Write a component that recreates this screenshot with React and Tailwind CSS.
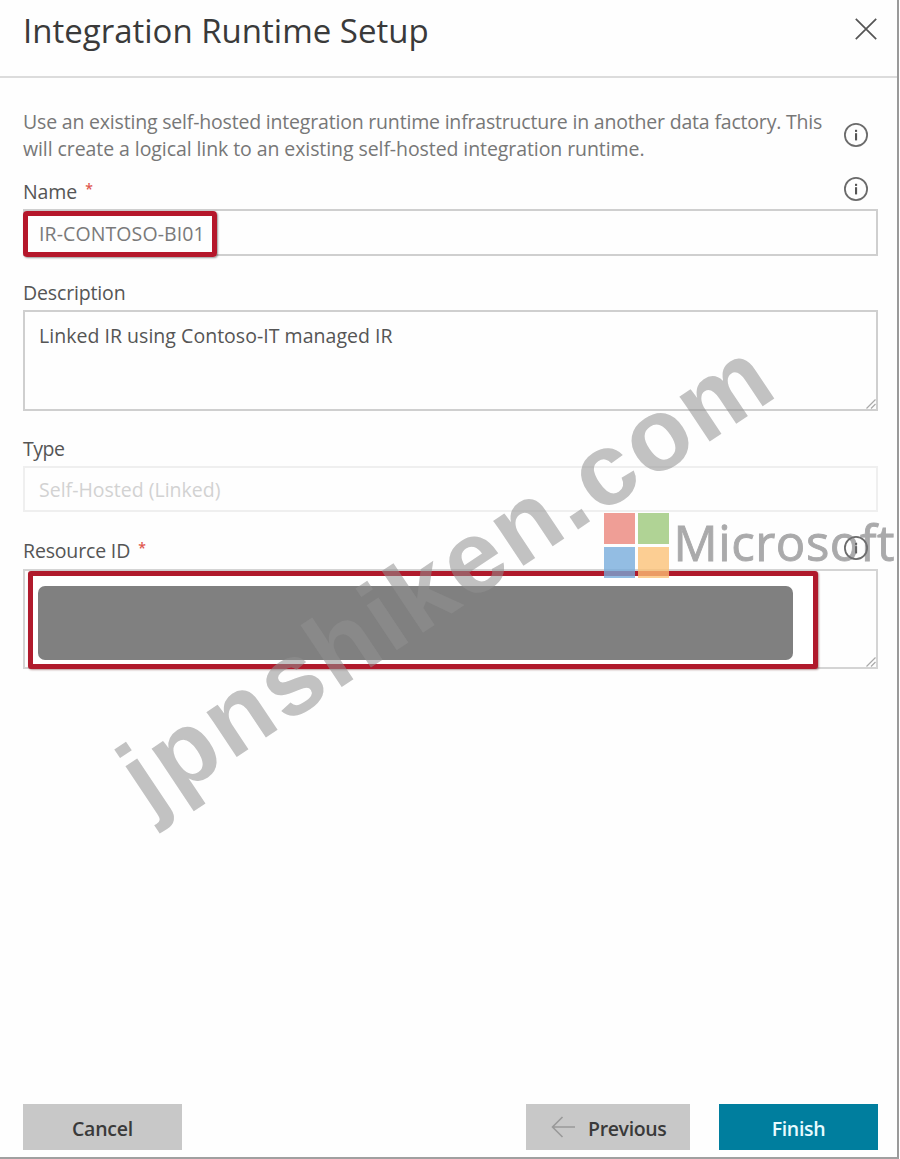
function InfoIcon({ className = "" }) {
  return (
    <svg viewBox="0 0 26 26" className={"h-[26px] w-[26px] shrink-0 " + className} fill="none">
      <circle cx="13" cy="13" r="11.1" stroke="#6b6b6b" strokeWidth="1.8" />
      <rect x="12" y="11.2" width="2.1" height="7.2" fill="#555" />
      <rect x="12" y="7.8" width="2.1" height="2.1" fill="#555" />
    </svg>
  );
}

function ResizeGrip() {
  return (
    <svg viewBox="0 0 10 10" className="absolute right-0 bottom-0 h-[10px] w-[10px]" stroke="#aaa" strokeWidth="1.2">
      <path d="M0.5 9.5 9.5 0.5M5 9.5 9.5 5" fill="none" />
    </svg>
  );
}

function Required() {
  return <span className="mt-[4px] ml-[8px] text-[14px] leading-[14px] font-semibold text-[#e0584f]">*</span>;
}

function Label({ children, className = "" }) {
  return <div className={"flex h-[27px] leading-[27px] text-[#555] " + className}>{children}</div>;
}

export default function App() {
  return (
    <div className="relative flex h-[1159px] w-[899px] flex-col overflow-hidden border-r-2 border-b-2 border-r-[#9a9a9a] border-b-[#a0a0a0] bg-[#fefefe] font-['Open_Sans',sans-serif] text-[19.5px]">
      <header className="flex h-[78px] items-start justify-between border-b-2 border-[#dcdcdc] pr-[20px] pl-[23px]">
        <h1 className="mt-[8px] text-[33px] leading-[45px] text-[#3a3a3a]">Integration Runtime Setup</h1>
        <svg viewBox="0 0 22 22" className="mt-[18px] h-[22px] w-[22px]" stroke="#555" strokeWidth="1.7" fill="none">
          <path d="M0.8 0.8 21.2 21.2M21.2 0.8 0.8 21.2" />
        </svg>
      </header>

      <main className="flex flex-1 flex-col pt-[30px] pr-[19px] pl-[23px]">
        <div className="flex justify-between">
          <p className="leading-[27px] whitespace-nowrap text-[#777]">
            <span className="block tracking-[-0.19px]">
              Use an existing self-hosted integration runtime infrastructure in another data factory. This
            </span>
            <span className="block tracking-[-0.08px]">
              will create a logical link to an existing self-hosted integration runtime.
            </span>
          </p>
          <InfoIcon className="mt-[14px] mr-[9px]" />
        </div>

        <div className="mt-[14px] flex h-[33px] items-start justify-between">
          <Label className="mt-[2px] tracking-[-0.1px]">
            Name
            <Required />
          </Label>
          <InfoIcon className="mr-[9px]" />
        </div>
        <div className="relative flex h-[47px] items-center border-2 border-[#cfcfcf] pl-[14px] tracking-[0.1px] text-[#7a7a7a]">
          <span className="mt-[2px]">IR-CONTOSO-BI01</span>
          <div className="absolute top-0 -left-[2px] h-[46px] w-[194px] rounded-[4px] border-[5px] border-[#b5172b] shadow-[1px_1px_2px_rgba(0,0,0,0.4)]" />
        </div>

        <Label className="mt-[23px] tracking-[-0.15px]">Description</Label>
        <div className="relative mt-[4px] h-[101px] border-2 border-[#cfcfcf] pt-[10px] pl-[14px] leading-[27px] tracking-[0.03px] text-[#555]">
          Linked IR using Contoso-IT managed IR
          <ResizeGrip />
        </div>

        <Label className="mt-[24px] tracking-[-0.5px]">Type</Label>
        <div className="mt-[4px] flex h-[46px] items-center border-2 border-[#efefef] pl-[14px] text-[#d2d2d2]">
          <span className="mt-[2px]">Self-Hosted (Linked)</span>
        </div>

        <div className="mt-[23px] flex h-[34px] items-start justify-between">
          <Label className="mt-[2px] tracking-[-0.16px]">
            Resource ID
            <Required />
          </Label>
          <InfoIcon className="mr-[9px]" />
        </div>
        <div className="relative h-[100px] border-2 border-[#d4d4d4]">
          <ResizeGrip />
          <div className="absolute top-0 left-[3px] h-[98px] w-[790px] rounded-[3px] border-[5px] border-[#b01a2c] bg-white p-[5px] pt-[10px] pr-[20px] shadow-[1px_1px_2px_rgba(80,0,0,0.4)]">
            <div className="h-[74px] rounded-[7px] bg-[#808080]" />
          </div>
        </div>
      </main>

      <footer className="flex h-[53px] items-start pr-[19px] pl-[23px] font-semibold text-[#3a3a3a]">
        <button className="flex h-[46px] w-[159px] items-center justify-center bg-[#c8c8c8] pt-[3px] tracking-[-0.2px]">
          Cancel
        </button>
        <button className="ml-auto flex h-[46px] w-[164px] items-center bg-[#c8c8c8] pt-[3px] pl-[25px] tracking-[-0.35px]">
          <svg viewBox="0 0 24 22" className="-mt-[3px] mr-[13px] h-[22px] w-[24px]" stroke="#999" strokeWidth="1.6" fill="none">
            <path d="M24 11H1.5M11.5 1 1.5 11 11.5 21" />
          </svg>
          Previous
        </button>
        <button className="ml-[29px] flex h-[46px] w-[159px] items-center justify-center bg-[#007e9e] pt-[3px] tracking-[-0.3px] text-[#e8fbff]">
          Finish
        </button>
      </footer>

      <div className="pointer-events-none absolute top-[728.5px] left-[150.3px] origin-[0_86.8px] rotate-[-33.7deg] font-['Liberation_Sans',sans-serif] text-[102.5px] leading-[102.5px] font-bold tracking-[3.3px] whitespace-nowrap text-[rgba(144,144,144,0.55)]">
        jpnshiken.com
      </div>

      <div className="pointer-events-none absolute top-[513px] left-[604px] flex">
        <div className="grid grid-cols-[31px_31px] grid-rows-[31px_31px] gap-[3px]">
          <div className="bg-[#eb8379]/78" />
          <div className="bg-[#9ac677]/78" />
          <div className="bg-[#75abdb]/78" />
          <div className="bg-[#fbc074]/78" />
        </div>
        <span className="mt-[-4px] ml-[4.5px] text-[49px] leading-[67px] font-medium tracking-[0.6px] text-[#737375] opacity-60 [-webkit-text-stroke:0.9px_#737375]">
          Microsoft
        </span>
      </div>
    </div>
  );
}
